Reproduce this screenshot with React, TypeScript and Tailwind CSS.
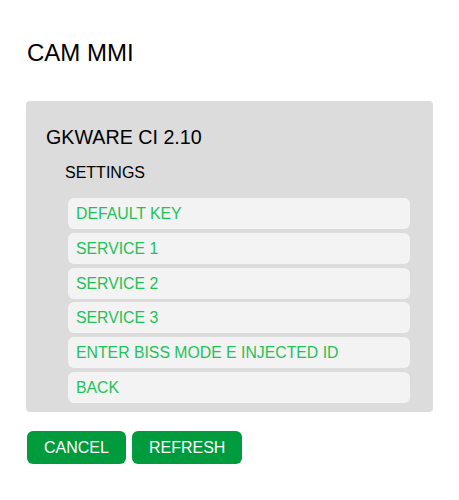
import React from 'react';

const items = [
  'DEFAULT KEY',
  'SERVICE 1',
  'SERVICE 2',
  'SERVICE 3',
  'ENTER BISS MODE E INJECTED ID',
  'BACK',
];

export default function App() {
  return (
    <div className="min-h-[500px] bg-white px-[26px] pt-[39px] font-['Liberation_Sans',Arial,sans-serif] text-black">
      <h1 className="text-[24px] leading-[28px] pl-[1px]">CAM MMI</h1>

      <div className="mt-[34px] rounded-[4px] bg-[#dcdcdc] pl-[20px] pr-[23px] pt-[24px] pb-[9px]">
        <h2 className="text-[19.7px] leading-[24px]">GKWARE CI 2.10</h2>
        <div className="mt-[14px] ml-[19px] text-[16px] leading-[20px]">SETTINGS</div>
        <div className="mt-[15px] ml-[22px] flex flex-col gap-[3.8px]">
          {items.map(item => (
            <div
              key={item}
              className="h-[31px] rounded-[6px] bg-[#f3f3f3] pl-[8px] pt-[6px] text-[15.8px] leading-[20px] text-[#1fc15a]"
            >
              {item}
            </div>
          ))}
        </div>
      </div>

      <div className="mt-[19px] flex gap-[6px] pl-[1px]">
        <button className="h-[33px] rounded-[6px] bg-[#009b3c] px-[17px] pt-[1px] text-[16px] leading-[20px] text-white">
          CANCEL
        </button>
        <button className="h-[33px] rounded-[6px] bg-[#009b3c] px-[17px] pt-[1px] text-[16px] leading-[20px] text-white">
          REFRESH
        </button>
      </div>
    </div>
  );
}
